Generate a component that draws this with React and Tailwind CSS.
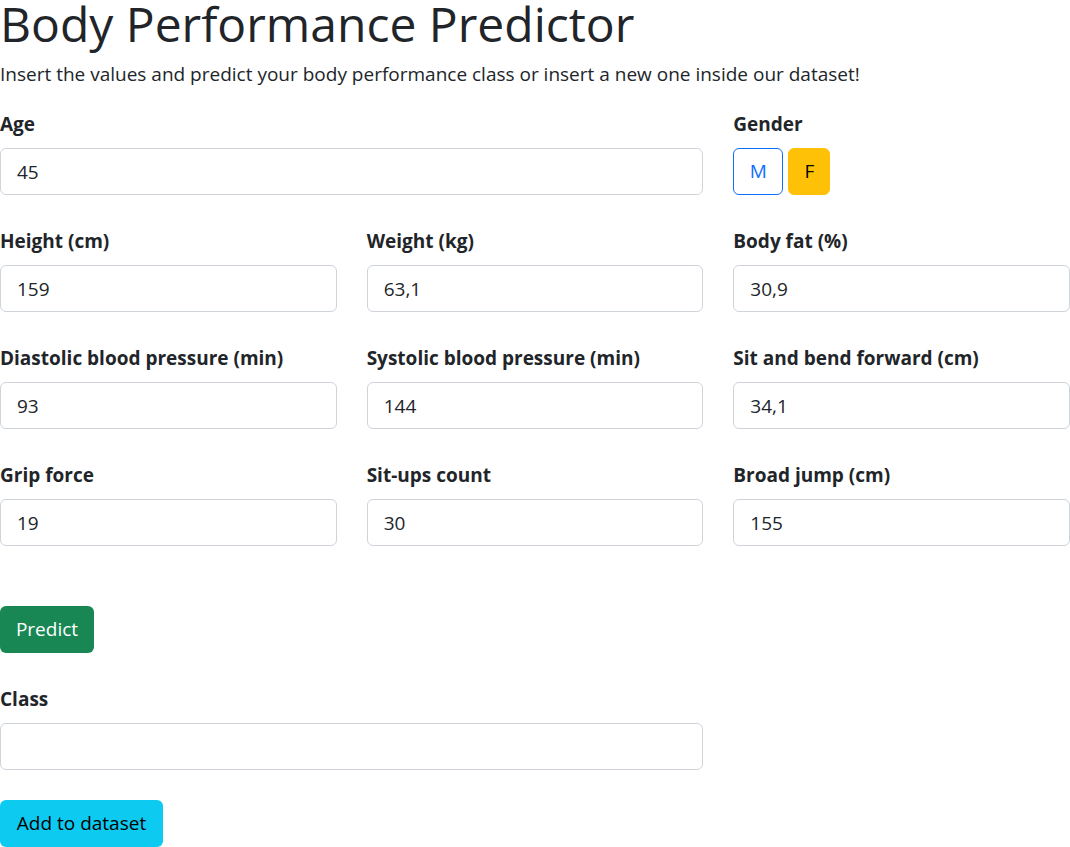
import React, { useState } from 'react';

const Field = ({ label, value, className = '' }) => (
  <div className={className}>
    <label className="block font-bold text-[19px] leading-[28px] mb-[10px]">{label}</label>
    <input
      type="text"
      defaultValue={value}
      className="w-full h-[47px] px-[16px] border border-[#ced4da] rounded-[6px] text-[19px] text-[#212529] outline-none"
    />
  </div>
);

export default function App() {
  const [gender, setGender] = useState('F');

  return (
    <div className="w-[1070px] text-[#212529] font-['Open_Sans',sans-serif]">
      <h1 className="text-[48px] leading-[48px] font-medium whitespace-nowrap">Body Performance Predictor</h1>
      <p className="text-[19px] leading-[28px] mt-[12px]">
        Insert the values and predict your body performance class or insert a new one inside our dataset!
      </p>

      <div className="grid grid-cols-3 gap-x-[30px] gap-y-[32px] mt-[22px]">
        <Field label="Age" value="45" className="col-span-2" />
        <div>
          <label className="block font-bold text-[19px] leading-[28px] mb-[10px]">Gender</label>
          <div className="flex gap-[5px]">
            <button
              onClick={() => setGender('M')}
              className={`h-[47px] w-[50px] rounded-[6px] border text-[19px] ${gender === 'M' ? 'bg-[#0d6efd] text-white border-[#0d6efd]' : 'border-[#0d6efd] text-[#0d6efd] bg-white'}`}
            >
              M
            </button>
            <button
              onClick={() => setGender('F')}
              className={`h-[47px] w-[42px] rounded-[6px] border text-[19px] ${gender === 'F' ? 'bg-[#ffc107] border-[#ffc107] text-black' : 'border-[#ffc107] text-[#ffc107] bg-white'}`}
            >
              F
            </button>
          </div>
        </div>

        <Field label="Height (cm)" value="159" />
        <Field label="Weight (kg)" value="63,1" />
        <Field label="Body fat (%)" value="30,9" />

        <Field label="Diastolic blood pressure (min)" value="93" />
        <Field label="Systolic blood pressure (min)" value="144" />
        <Field label="Sit and bend forward (cm)" value="34,1" />

        <Field label="Grip force" value="19" />
        <Field label="Sit-ups count" value="30" />
        <Field label="Broad jump (cm)" value="155" />
      </div>

      <button className="block mt-[60px] h-[47px] w-[94px] rounded-[6px] bg-[#198754] text-white text-[19px]">
        Predict
      </button>

      <div className="grid grid-cols-3 gap-x-[30px] mt-[32px]">
        <Field label="Class" value="" className="col-span-2" />
      </div>

      <button className="block mt-[30px] h-[47px] w-[163px] rounded-[6px] bg-[#0dcaf0] text-black text-[19px]">
        Add to dataset
      </button>
    </div>
  );
}
